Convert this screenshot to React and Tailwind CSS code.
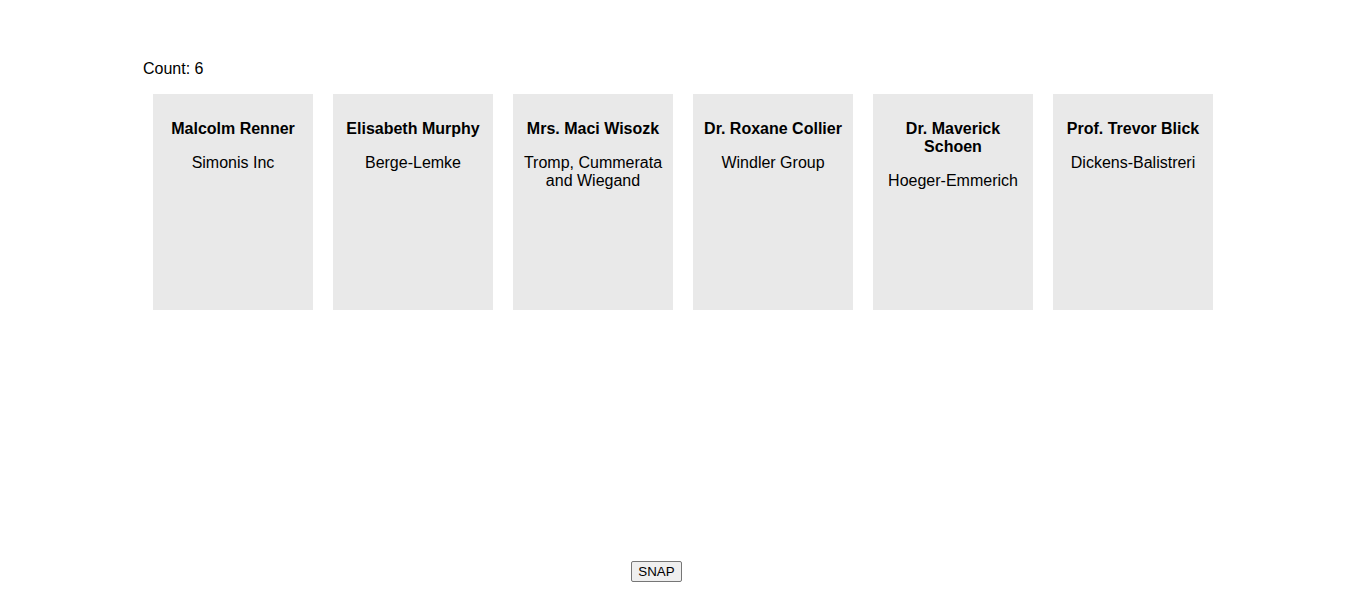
import React from "react";

const people = [
  { name: "Malcolm Renner", company: "Simonis Inc" },
  { name: "Elisabeth Murphy", company: "Berge-Lemke" },
  { name: "Mrs. Maci Wisozk", company: "Tromp, Cummerata and Wiegand" },
  { name: "Dr. Roxane Collier", company: "Windler Group" },
  { name: "Dr. Maverick Schoen", company: "Hoeger-Emmerich" },
  { name: "Prof. Trevor Blick", company: "Dickens-Balistreri" },
];

function Card({ person }) {
  return (
    <div className="w-[160px] h-[216px] bg-[#e9e9e9] px-[10px] pt-[26px] text-center">
      <h3 className="font-bold text-[16px] leading-[18px]">{person.name}</h3>
      <p className="mt-[16px] text-[16px] leading-[18px]">{person.company}</p>
    </div>
  );
}

export default function App() {
  return (
    <div
      className="h-[613px] flex flex-col text-black bg-white"
      style={{ fontFamily: '"Liberation Sans", Arial, sans-serif' }}
    >
      <div className="w-[1080px] mx-auto pt-[60px]">
        <div className="text-[16px] leading-[18px]">Count: {people.length}</div>
        <div className="flex gap-[20px] px-[10px] mt-[16px]">
          {people.map((p) => (
            <Card key={p.name} person={p} />
          ))}
        </div>
      </div>
      <div className="flex-1" />
      <div className="flex justify-center mb-[31px]">
        <button className="mr-[53px] w-[51px] h-[21px] bg-[#efefef] border border-[#767676] rounded-[2px] text-[13.33px] leading-[16px] text-black">
          SNAP
        </button>
      </div>
    </div>
  );
}
